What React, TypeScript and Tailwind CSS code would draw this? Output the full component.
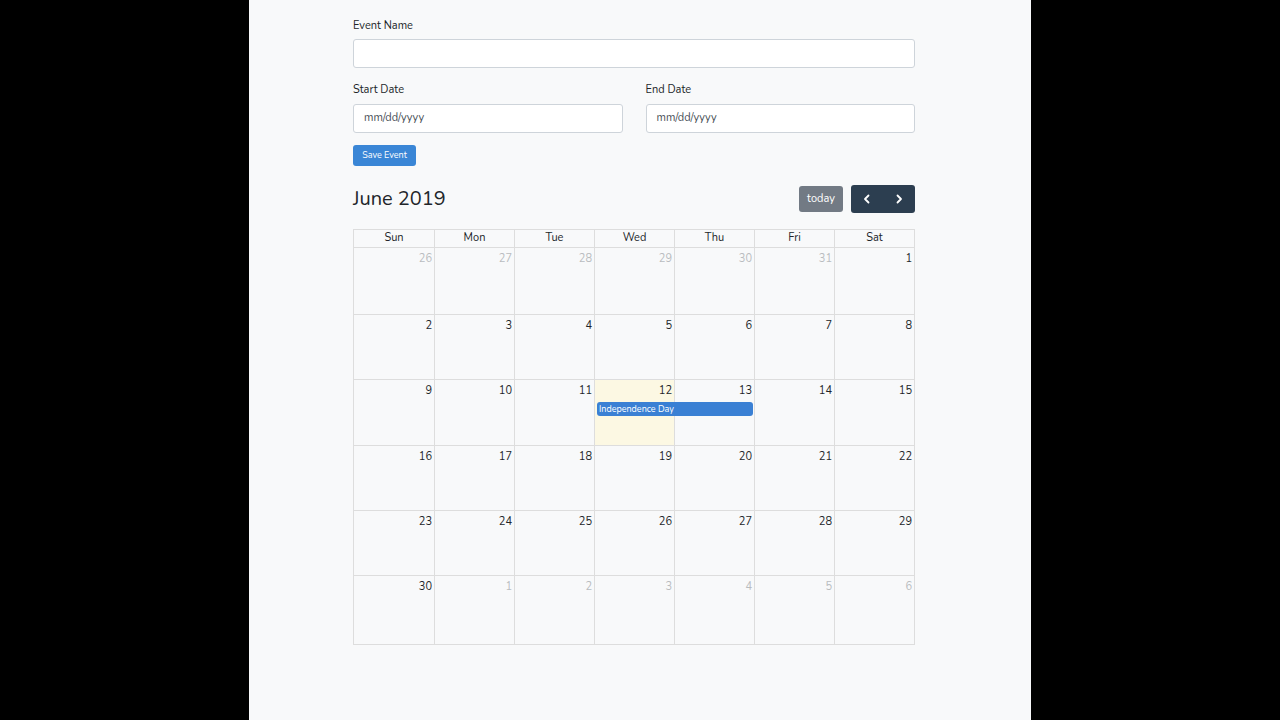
import React from "react";

const weeks: { d: number; other?: boolean }[][] = [
  [{ d: 26, other: true }, { d: 27, other: true }, { d: 28, other: true }, { d: 29, other: true }, { d: 30, other: true }, { d: 31, other: true }, { d: 1 }],
  [{ d: 2 }, { d: 3 }, { d: 4 }, { d: 5 }, { d: 6 }, { d: 7 }, { d: 8 }],
  [{ d: 9 }, { d: 10 }, { d: 11 }, { d: 12 }, { d: 13 }, { d: 14 }, { d: 15 }],
  [{ d: 16 }, { d: 17 }, { d: 18 }, { d: 19 }, { d: 20 }, { d: 21 }, { d: 22 }],
  [{ d: 23 }, { d: 24 }, { d: 25 }, { d: 26 }, { d: 27 }, { d: 28 }, { d: 29 }],
  [{ d: 30 }, { d: 1, other: true }, { d: 2, other: true }, { d: 3, other: true }, { d: 4, other: true }, { d: 5, other: true }, { d: 6, other: true }],
];

const rowHeights = ["h-[67px]", "h-[65px]", "h-[66px]", "h-[65px]", "h-[65px]", "h-[69px]"];
const days = ["Sun", "Mon", "Tue", "Wed", "Thu", "Fri", "Sat"];

export default function App() {
  return (
    <div className="w-[1280px] h-[720px] bg-black flex justify-center overflow-hidden" style={{ fontFamily: "Nunito, Lato, 'Open Sans', sans-serif" }}>
      <div className="w-[782px] h-full bg-[#f8f9fa] pl-[104px] pr-[116px] pt-[18px]">
        <div className="text-[11px] text-[#212529] leading-[16px]">Event Name</div>
        <div className="mt-[5px] h-[29px] w-full bg-white border border-[#ced4da] rounded-[3px]" />
        <div className="mt-[14px] flex gap-[23px]">
          <div className="flex-1">
            <div className="text-[11px] text-[#212529] leading-[16px]">Start Date</div>
            <div className="mt-[6px] h-[29px] bg-white border border-[#ced4da] rounded-[3px] flex items-center px-[10px] text-[11px] text-[#495057]">mm/dd/yyyy</div>
          </div>
          <div className="flex-1">
            <div className="text-[11px] text-[#212529] leading-[16px]">End Date</div>
            <div className="mt-[6px] h-[29px] bg-white border border-[#ced4da] rounded-[3px] flex items-center px-[10px] text-[11px] text-[#495057]">mm/dd/yyyy</div>
          </div>
        </div>
        <div className="mt-[12px] w-[63px] h-[21px] rounded-[3px] bg-[#3a86d6] text-white text-[9px] flex items-center justify-center">Save Event</div>

        <div className="mt-[19px] flex items-center justify-between h-[28px]">
          <div className="text-[20px] text-[#212529] leading-none">June 2019</div>
          <div className="flex items-center gap-[8px]">
            <div className="w-[44px] h-[26px] rounded-[3px] bg-[#727a84] text-white text-[11px] flex items-center justify-center">today</div>
            <div className="w-[64px] h-[28px] rounded-[3px] bg-[#2c3e50] text-white flex items-center">
              <div className="flex-1 flex items-center justify-center">
                <svg width="10" height="10" viewBox="0 0 10 10" fill="none" stroke="white" strokeWidth="1.8" strokeLinecap="round" strokeLinejoin="round"><path d="M6.5 1.5 L3 5 L6.5 8.5" /></svg>
              </div>
              <div className="flex-1 flex items-center justify-center">
                <svg width="10" height="10" viewBox="0 0 10 10" fill="none" stroke="white" strokeWidth="1.8" strokeLinecap="round" strokeLinejoin="round"><path d="M3.5 1.5 L7 5 L3.5 8.5" /></svg>
              </div>
            </div>
          </div>
        </div>

        <div className="mt-[16px] border border-[#dddddd] w-[562px]">
          <div className="grid grid-cols-[81px_repeat(5,80px)_79px] h-[17px]">
            {days.map((d, i) => (
              <div key={d} className={`text-[11px] text-[#212529] flex items-center justify-center ${i < 6 ? "border-r border-[#dddddd]" : ""}`}>{d}</div>
            ))}
          </div>
          {weeks.map((w, wi) => (
            <div key={wi} className={`relative grid grid-cols-[81px_repeat(5,80px)_79px] border-t border-[#dddddd] ${rowHeights[wi]}`}>
              {w.map((c, ci) => {
                const today = wi === 2 && ci === 3;
                return (
                  <div key={ci} className={`${ci < 6 ? "border-r border-[#dddddd]" : ""} ${today ? "bg-[#fcf8e3]" : ""} flex justify-end pr-[2px] pt-[3px]`}>
                    <span className={`text-[11px] leading-[16px] ${c.other ? "text-[#b9bcbf]" : "text-[#212529]"}`}>{c.d}</span>
                  </div>
                );
              })}
              {wi === 2 && (
                <div className="absolute left-[243px] top-[22px] w-[156px] h-[14px] rounded-[3px] bg-[#3a80d4] text-white text-[9px] leading-[14px] px-[2px]">Independence Day</div>
              )}
            </div>
          ))}
        </div>
      </div>
    </div>
  );
}
